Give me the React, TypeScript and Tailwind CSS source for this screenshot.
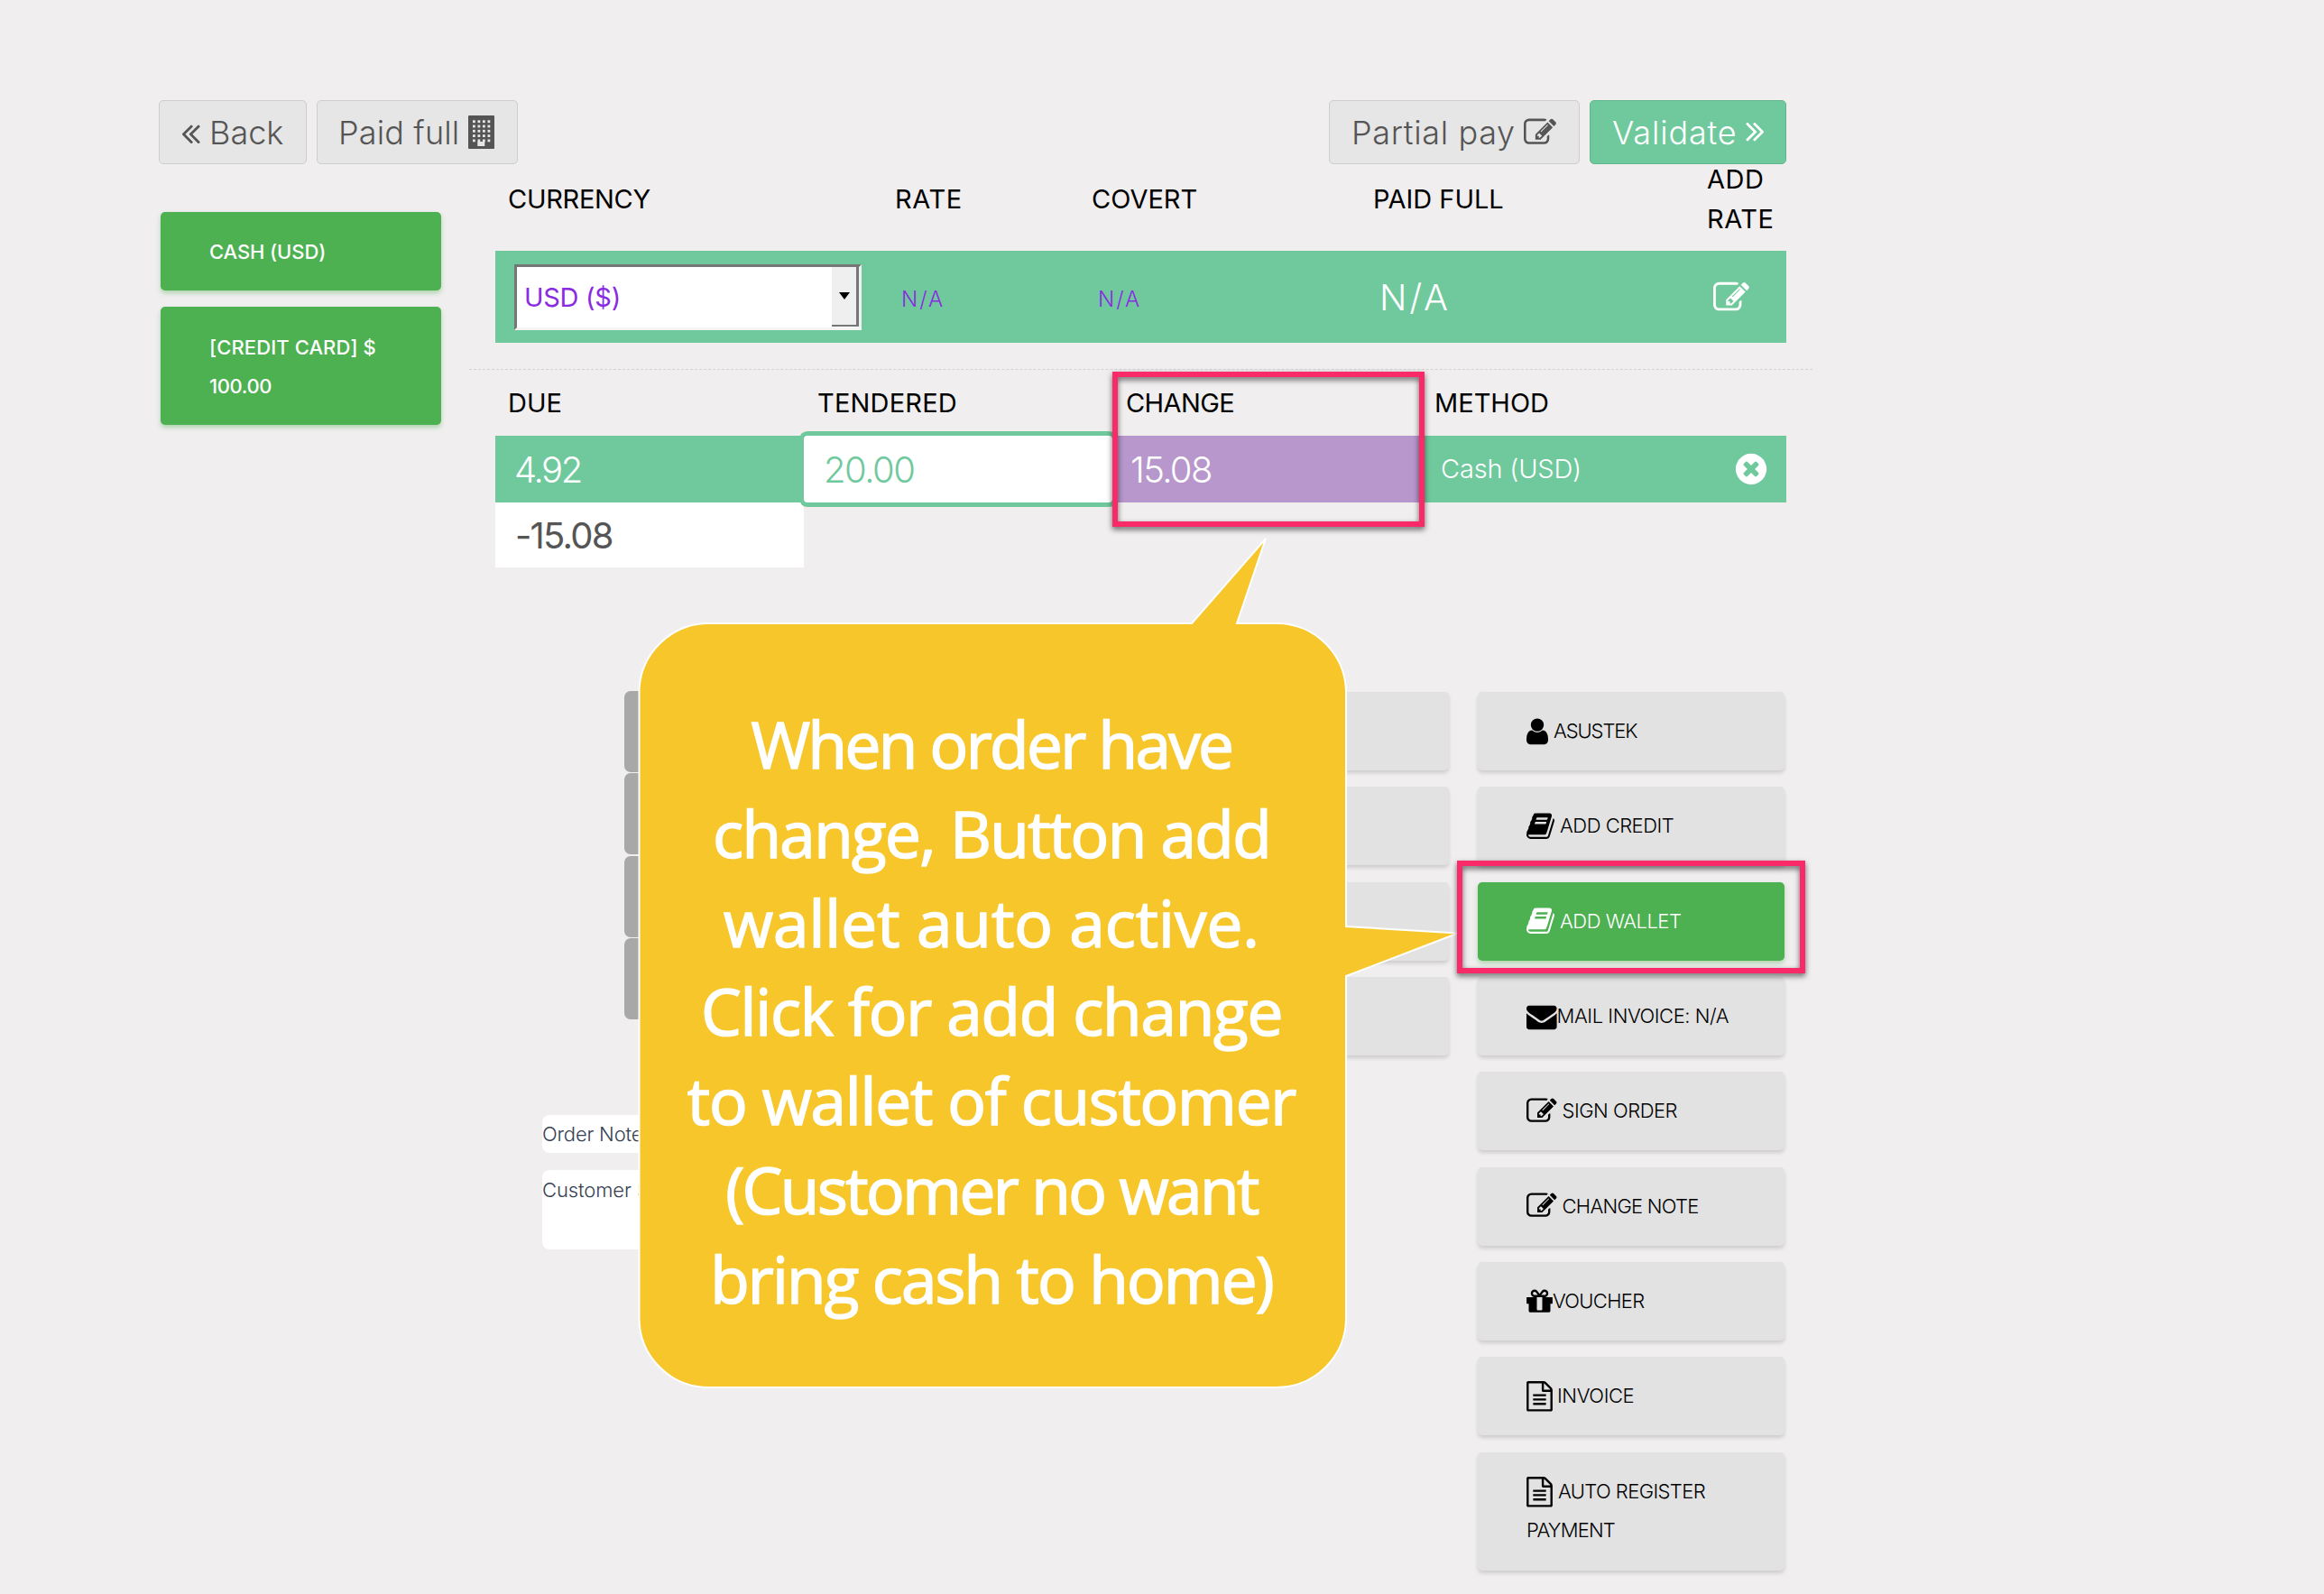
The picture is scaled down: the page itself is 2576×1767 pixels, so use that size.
import React from "react";

const PATHS = {
  edit: {
    box: "0 0 1792 1792",
    d: "M888 1184l116-116-152-152-116 116v56h96v96h56zm440-720q-16-16-33 1l-350 350q-17 17-1 33t33-1l350-350q17-17 1-33zm80 594v190q0 119-84.5 203.5t-203.5 84.5h-832q-119 0-203.5-84.5t-84.5-203.5v-832q0-119 84.5-203.5t203.5-84.5h832q63 0 117 25 15 7 18 23 3 17-9 29l-49 49q-14 14-32 8-23-6-45-6h-832q-66 0-113 47t-47 113v832q0 66 47 113t113 47h832q66 0 113-47t47-113v-126q0-13 9-22l64-64q15-15 35-7t20 29zm-96-738l288 288-672 672h-288v-288zm444 132l-92 92-288-288 92-92q28-28 68-28t68 28l152 152q28 28 28 68t-28 68z",
  },
  back: {
    box: "446 0 960 1792",
    d: "M1011 1376q0 13-10 23l-50 50q-10 10-23 10t-23-10l-466-466q-10-10-10-23t10-23l466-466q10-10 23-10t23 10l50 50q10 10 10 23t-10 23l-393 393 393 393q10 10 10 23zm384 0q0 13-10 23l-50 50q-10 10-23 10t-23-10l-466-466q-10-10-10-23t10-23l466-466q10-10 23-10t23 10l50 50q10 10 10 23t-10 23l-393 393 393 393q10 10 10 23z",
  },
  user: {
    box: "256 0 1280 1792",
    d: "M1536 1399q0 109-62.5 187t-150.5 78h-854q-88 0-150.5-78t-62.5-187q0-85 8.5-160.5t31.5-152 58.5-131 94-89 134.5-34.5q131 128 313 128t313-128q76 0 134.5 34.5t94 89 58.5 131 31.5 152 8.5 160.5zm-256-887q0 159-112.5 271.5t-271.5 112.5-271.5-112.5-112.5-271.5 112.5-271.5 271.5-112.5 271.5 112.5 112.5 271.5z",
  },
  book: {
    box: "64 0 1664 1792",
    d: "M1703 478q40 57 18 129l-275 906q-19 64-76.5 107.5t-122.5 43.5h-923q-77 0-148.5-53.5t-99.5-131.5q-24-67-2-127 0-4 3-27t4-37q1-8-3-21.5t-3-19.5q2-11 8-21t16.5-23.5 16.5-23.5q23-38 45-91.5t30-91.5q3-10 .5-30t-.5-28q3-11 17-28t17-23q21-36 42-92t25-90q1-9-2.5-32t.5-28q4-13 22-30.5t22-22.5q19-26 42.5-84.5t27.5-96.5q1-8-3-25.5t-2-26.5q2-8 9-18t18-23 17-21q8-12 16.5-30.5t15-35 16-36 19.5-32 26.5-23.5 36-11.5 47.5 5.5l-1 3q38-9 51-9h761q74 0 114 56t18 130l-274 906q-36 119-71.5 153.5t-128.5 34.5h-869q-27 0-38 15-11 16-1 43 24 70 144 70h923q29 0 56-15.5t35-41.5l300-987q7-22 5-57 38 15 59 43zm-1064 2q-4 13 2 22.5t20 9.5h608q13 0 25.5-9.5t16.5-22.5l21-64q4-13-2-22.5t-20-9.5h-608q-13 0-25.5 9.5t-16.5 22.5zm-83 256q-4 13 2 22.5t20 9.5h608q13 0 25.5-9.5t16.5-22.5l21-64q4-13-2-22.5t-20-9.5h-608q-13 0-25.5 9.5t-16.5 22.5z",
  },
  mail: {
    box: "0 0 1792 1792",
    d: "M1792 710v794q0 66-47 113t-113 47h-1472q-66 0-113-47t-47-113v-794q44 49 101 87 362 246 497 345 57 42 92.5 65.5t94.5 48 110 24.5h2q51 0 110-24.5t94.5-48 92.5-65.5q170-123 498-345 57-39 100-87zm0-294q0 79-49 151t-122 123q-376 261-468 325-10 7-42.5 31t-54 38.5-52 32.5-57.5 27-50 9h-2q-23 0-50-9t-57.5-27-52-32.5-54-38.5-42.5-31q-91-64-262-182.5t-205-142.5q-62-42-117-115.5t-55-136.5q0-78 41.5-130t118.5-52h1472q65 0 112.5 47t47.5 113z",
  },
  gift: {
    box: "128 0 1536 1792",
    d: "M1056 1356v-716h-320v716q0 25 18 38.5t46 13.5h192q28 0 46-13.5t18-38.5zm-456-844h195l-126-161q-26-31-69-31-40 0-68 28t-28 68 28 68 68 28zm688-96q0-40-28-68t-68-28q-43 0-69 31l-125 161h194q40 0 68-28t28-68zm376 256v320q0 14-9 23t-23 9h-96v416q0 40-28 68t-68 28h-1088q-40 0-68-28t-28-68v-416h-96q-14 0-23-9t-9-23v-320q0-14 9-23t23-9h440q-93 0-158.5-65.5t-65.5-158.5 65.5-158.5 158.5-65.5q107 0 168 77l128 165 128-165q61-77 168-77 93 0 158.5 65.5t65.5 158.5-65.5 158.5-158.5 65.5h440q14 0 23 9t9 23z",
  },
  file: {
    box: "128 0 1536 1792",
    d: "M1596 380q28 28 48 76t20 88v1152q0 40-28 68t-68 28h-1344q-40 0-68-28t-28-68v-1600q0-40 28-68t68-28h896q40 0 88 20t76 48zm-444-244v376h376q-10-29-22-41l-313-313q-12-12-41-22zm384 1528v-1024h-416q-40 0-68-28t-28-68v-416h-768v1536h1280zm-1024-864q0-14 9-23t23-9h704q14 0 23 9t9 23v64q0 14-9 23t-23 9h-704q-14 0-23-9t-9-23v-64zm736 224q14 0 23 9t9 23v64q0 14-9 23t-23 9h-704q-14 0-23-9t-9-23v-64q0-14 9-23t23-9h704zm0 256q14 0 23 9t9 23v64q0 14-9 23t-23 9h-704q-14 0-23-9t-9-23v-64q0-14 9-23t23-9h704z",
  },
  close: {
    box: "0 0 1792 1792",
    d: "M1277 1122q0-26-19-45l-181-181 181-181q19-19 19-45 0-27-19-46l-90-90q-19-19-46-19-26 0-45 19l-181 181-181-181q-19-19-45-19-27 0-46 19l-90 90q-19 19-19 46 0 26 19 45l181 181-181 181q-19 19-19 45 0 27 19 46l90 90q19 19 46 19 26 0 45-19l181-181 181 181q19 19 45 19 27 0 46-19l90-90q19-19 19-46zm387-226q0 209-103 385.5t-279.5 279.5-385.5 103-385.5-103-279.5-279.5-103-385.5 103-385.5 279.5-279.5 385.5-103 385.5 103 279.5 279.5 103 385.5z",
  },
};

type IconName = keyof typeof PATHS;

function Icon({ name, className }: { name: IconName; className: string }) {
  return (
    <svg viewBox={PATHS[name].box} className={`shrink-0 ${className}`} fill="currentColor" aria-hidden="true">
      <path d={PATHS[name].d} />
    </svg>
  );
}

function Building() {
  const xs = [5, 10.5, 16, 21.5];
  const ys = [5.3, 10.6, 15.9, 21.2, 26.5];
  return (
    <svg viewBox="0 0 29 37" className="ml-[10px] h-[37px] w-[29px] shrink-0" aria-hidden="true">
      <rect width="29" height="37" rx="1" fill="#555" />
      {ys.map((y) => xs.map((x) => <rect key={`${x}-${y}`} x={x} y={y} width="2.8" height="2.8" fill="#e6e6e6" />))}
      <rect x="10.3" y="29" width="8" height="5" fill="#e6e6e6" />
    </svg>
  );
}

const topButton = "flex h-[71px] items-center rounded-[5px] border text-[36px] font-light whitespace-nowrap";
const lightButton = "border-[#cdcdcd] bg-[#e6e6e6] text-[#555]";

function TopBar() {
  return (
    <header className="flex h-[72px] justify-between">
      <div className="flex gap-[11px]">
        <button className={`${topButton} ${lightButton} w-[164px] pl-[25px]`}>
          <Icon name="back" className="mt-[2px] mr-[10px] h-[37px] w-[20px]" />
          Back
        </button>
        <button className={`${topButton} ${lightButton} w-[223px] pl-[23px]`}>
          <span className="tracking-[0.15px]">Paid full</span>
          <Building />
        </button>
      </div>
      <div className="flex gap-[11px]">
        <button className={`${topButton} ${lightButton} w-[278px] pl-[24px]`}>
          <span className="tracking-[0.65px]">Partial pay</span>
          <Icon name="edit" className="ml-[9px] size-[36px]" />
        </button>
        <button className={`${topButton} w-[218px] border-[#60b78b] bg-[#70c99d] pl-[24px] text-white`}>
          <span className="tracking-[0.85px]">Validate</span>
          <Icon name="back" className="mt-[2px] ml-[9px] h-[37px] w-[20px] rotate-180" />
        </button>
      </div>
    </header>
  );
}

const greenCard =
  "w-[311px] rounded-[5px] bg-[#4db051] pt-[23px] pb-[21px] pl-[54px] text-left text-[22px] leading-[43px] font-medium text-white shadow-[0_3px_5px_rgba(77,176,81,0.4)]";

function Payments() {
  return (
    <aside className="ml-[2px] flex w-[311px] flex-col gap-[18px] pt-[52px]">
      <button className={`${greenCard} h-[87px] tracking-[-0.1px]`}>CASH (USD)</button>
      <button className={`${greenCard} h-[131px]`}>
        <span className="block tracking-[0.1px]">[CREDIT CARD] $</span>
        <span className="block tracking-[-0.4px]">100.00</span>
      </button>
    </aside>
  );
}

const currencyGrid = "grid grid-cols-[428px_218px_313px_370px_102px] items-center";
const amountGrid = "grid grid-cols-[342px_342px_343px_404px] items-center";

function CurrencyTable() {
  return (
    <section>
      <div className={`${currencyGrid} mb-[20px] h-[75px] text-[29px] leading-[44px] text-black`}>
        <span className="pl-[14px] tracking-[-0.3px]">CURRENCY</span>
        <span className="pl-[15px] tracking-[0.6px]">RATE</span>
        <span className="pl-[15px]">COVERT</span>
        <span className="pl-[14px]">PAID FULL</span>
        <span className="-my-[10px] pl-[14px] tracking-[0.5px]">
          ADD
          <br />
          RATE
        </span>
      </div>
      <div className={`${currencyGrid} h-[102px] bg-[#70c99d] font-light`}>
        <div className="ml-[21px] flex h-[73px] w-[385px] justify-between border-[3px] border-t-[#767676] border-r-[#f0f0f0] border-b-[#f4f4f4] border-l-[#767676] bg-white">
          <span className="self-center pt-[2px] pl-[8px] text-[29px] font-normal tracking-[-0.3px] text-[#8a2be2]">USD ($)</span>
          <span className="flex h-[66px] w-[30px] items-center justify-center border-r-[3px] border-b-[2px] border-[#767676] bg-[#efefef]">
            <span className="border-x-[6px] border-t-[8px] border-x-transparent border-t-black" />
          </span>
        </div>
        <span className="pt-[6px] pl-[22px] text-[24px] tracking-[2px] text-[#8a2be2]">N/A</span>
        <span className="pt-[6px] pl-[22px] text-[24px] tracking-[2px] text-[#8a2be2]">N/A</span>
        <span className="pt-[1px] pl-[21px] text-[40px] tracking-[2.8px] text-white">N/A</span>
        <Icon name="edit" className="mt-[2px] ml-[21px] size-[40px] text-white" />
      </div>
    </section>
  );
}

function AmountTable() {
  return (
    <section>
      <div className={`${amountGrid} h-[73px] text-[29px] text-black`}>
        <span className="pl-[14px]">DUE</span>
        <span className="pl-[15px] tracking-[0.2px]">TENDERED</span>
        <span className="pl-[15px] tracking-[-0.6px]">CHANGE</span>
        <span className="pl-[14px]">METHOD</span>
      </div>
      <div className={`${amountGrid} h-[74px] text-[40px] leading-[76px] font-light text-white`}>
        <span className="h-[74px] bg-[#70c99d] pl-[21px] tracking-[-2.4px]">4.92</span>
        <span className="relative z-10 h-[74px] rounded-[4px] bg-white pl-[22px] tracking-[-1.5px] text-[#70c99d] shadow-[0_0_0_5px_#70c99d]">
          20.00
        </span>
        <span className="h-[74px] bg-[#b797cc] pl-[20px] tracking-[-1.6px]">15.08</span>
        <div className="flex h-[74px] items-center justify-between bg-[#70c99d] pr-[19px] pl-[21px] text-[29px] tracking-[-0.2px]">
          Cash (USD)
          <Icon name="close" className="size-[40px]" />
        </div>
      </div>
      <div className="h-[72px] w-[342px] bg-white pl-[22px] text-[40px] leading-[74px] tracking-[-1.8px] text-[#555]">
        -15.08
      </div>
    </section>
  );
}

const actionCard =
  "w-[340px] shrink-0 rounded-[5px] pt-[22px] pb-[22px] pl-[54px] text-left text-[22px] leading-[43px] font-light";
const grayCard = "bg-[#e2e2e2] text-black shadow-[0_3px_4px_rgba(0,0,0,0.14)]";

function Lower() {
  return (
    <section className="mt-[138px] flex items-start pr-[2px]">
      <div className="-mt-px w-[640px] pl-[52px]">
        <div className="ml-[91px] flex flex-col gap-[1.3px]">
          {[0, 1, 2, 3].map((i) => (
            <div key={i} className="h-[90px] rounded-[7px] bg-[#a8a8a8]" />
          ))}
        </div>
        <div className="mt-[106px] h-[42px] overflow-hidden rounded-[8px] bg-white text-[22px] leading-[42px] font-light tracking-[-0.2px] whitespace-nowrap text-[#354052]">
          Order Note
        </div>
        <div className="mt-[19px] h-[88px] overflow-hidden rounded-[8px] bg-white text-[22px] leading-[44px] font-light tracking-[-0.1px] whitespace-nowrap text-[#354052]">
          Customer Signature
        </div>
      </div>
      <div className="ml-auto flex flex-col gap-[18.35px]">
        {[0, 1, 2, 3].map((i) => (
          <div key={i} className={`${actionCard} ${grayCard} h-[87px]`} />
        ))}
      </div>
      <div className="ml-[32px] flex flex-col gap-[18.35px]">
        <button className={`${actionCard} ${grayCard} h-[87px]`}>
          <span className="flex items-center">
            <Icon name="user" className="mr-[6px] h-[33.6px] w-[24px]" />
            <span className="tracking-[-1.1px]">ASUSTEK</span>
          </span>
        </button>
        <button className={`${actionCard} ${grayCard} h-[87px]`}>
          <span className="flex items-center">
            <Icon name="book" className="mr-[6px] h-[33.6px] w-[31px]" />
            <span className="tracking-[-0.5px]">ADD CREDIT</span>
          </span>
        </button>
        <button className={`${actionCard} h-[87px] bg-[#4db051] text-white shadow-[0_3px_5px_rgba(77,176,81,0.4)]`}>
          <span className="flex items-center">
            <Icon name="book" className="mr-[6px] h-[33.6px] w-[31px]" />
            <span className="tracking-[-0.5px]">ADD WALLET</span>
          </span>
        </button>
        <button className={`${actionCard} ${grayCard} h-[87px]`}>
          <span className="flex items-center">
            <Icon name="mail" className="size-[33.6px]" />
            <span className="tracking-[-0.45px] whitespace-nowrap">MAIL INVOICE: N/A</span>
          </span>
        </button>
        <button className={`${actionCard} ${grayCard} h-[87px]`}>
          <span className="flex items-center">
            <Icon name="edit" className="mr-[6px] size-[33.6px]" />
            <span className="tracking-[-0.5px]">SIGN ORDER</span>
          </span>
        </button>
        <button className={`${actionCard} ${grayCard} h-[87px]`}>
          <span className="flex items-center">
            <Icon name="edit" className="mr-[6px] size-[33.6px]" />
            <span className="tracking-[-0.75px]">CHANGE NOTE</span>
          </span>
        </button>
        <button className={`${actionCard} ${grayCard} h-[87px]`}>
          <span className="flex items-center">
            <Icon name="gift" className="h-[33.6px] w-[29px]" />
            <span className="tracking-[-0.7px]">VOUCHER</span>
          </span>
        </button>
        <button className={`${actionCard} ${grayCard} h-[87px]`}>
          <span className="flex items-center">
            <Icon name="file" className="mr-[5px] h-[33.6px] w-[29px]" />
            <span className="tracking-[-0.4px]">INVOICE</span>
          </span>
        </button>
        <button className={`${actionCard} ${grayCard} h-[131px]`}>
          <span className="flex items-center">
            <Icon name="file" className="mr-[6px] h-[33.6px] w-[29px]" />
            <span className="tracking-[-0.6px] whitespace-nowrap">AUTO REGISTER</span>
          </span>
          <span className="block tracking-[-0.8px]">PAYMENT</span>
        </button>
      </div>
    </section>
  );
}

function Callout() {
  return (
    <div className="absolute top-[590px] left-[706px] h-[952px] w-[914px]">
      <svg viewBox="706 590 914 952" className="absolute inset-0 size-full" aria-hidden="true">
        <path
          d="M785 691H1321L1403 597L1371 691H1415A77 77 0 0 1 1492 768V1027L1616 1034.500L1492 1082V1461A77 77 0 0 1 1415 1538H785A77 77 0 0 1 708.500 1461V768A77 77 0 0 1 785 691Z"
          fill="#f7c62a"
          stroke="#fff"
          strokeWidth="2"
        />
      </svg>
      <div className="relative mt-[186px] ml-[1px] flex w-[784px] flex-col items-center font-['Open_Sans',sans-serif] text-[71px] leading-[98.8px] font-medium whitespace-nowrap text-white [-webkit-text-stroke:1.6px_white]">
        <span className="tracking-[-2.6px]">When order have</span>
        <span className="tracking-[-1.6px]">change, Button add</span>
        <span>wallet auto active.</span>
        <span className="tracking-[-1.2px]">Click for add change</span>
        <span className="tracking-[-1.2px]">to wallet of customer</span>
        <span className="tracking-[-2.5px]">(Customer no want</span>
        <span className="tracking-[-1.9px]">bring cash to home)</span>
      </div>
    </div>
  );
}

const highlight = "absolute border-[6px] border-[#fa2a68] drop-shadow-[0_3px_3px_rgba(0,0,0,0.6)]";

export default function App() {
  return (
    <div className="relative h-[1767px] w-[2576px] overflow-hidden bg-[#f0eeef] font-['Inter',sans-serif]">
      <div className="ml-[176px] w-[1804px] pt-[111px]">
        <TopBar />
        <div className="flex items-start">
          <Payments />
          <main className="ml-[60px] w-[1431px]">
            <CurrencyTable />
            <div className="-mx-[29px] mt-[29px] border-t border-dashed border-[#d4d2d3]" />
            <AmountTable />
            <Lower />
          </main>
        </div>
      </div>
      <Callout />
      <div className={`${highlight} top-[412px] left-[1233px] z-20 h-[172px] w-[346px]`} />
      <div className={`${highlight} top-[954px] left-[1615px] z-20 h-[125px] w-[386px]`} />
    </div>
  );
}
